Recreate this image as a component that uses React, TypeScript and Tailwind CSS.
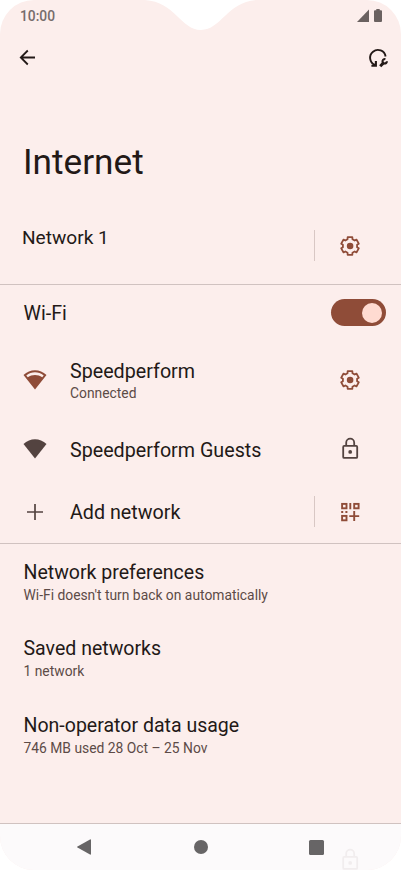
import type { ReactNode } from "react";

const TITLE = "text-[19.7px] leading-6 text-[#231917]";
const SUMMARY = "text-[13.85px] leading-5 text-[#5c4b47]";

/** Six-toothed outline: [angle offset, radius] corners repeated every 60 degrees. */
const GEAR_POINTS = Array.from({ length: 6 }, (_, i) =>
  [
    [-20, 7.2],
    [-15, 9.1],
    [15, 9.1],
    [20, 7.2],
  ].map(([offset, r]) => {
    const angle = ((i * 60 + offset) * Math.PI) / 180;
    return `${(12 + r * Math.sin(angle)).toFixed(2)},${(12 - r * Math.cos(angle)).toFixed(2)}`;
  }),
)
  .flat()
  .join(" ");

function GearIcon() {
  return (
    <svg viewBox="0 0 24 24" className="size-6 text-[#8f4c38]" fill="none">
      <polygon points={GEAR_POINTS} stroke="currentColor" strokeWidth="1.8" strokeLinejoin="round" />
      <circle cx="12.1" cy="12" r="3.3" fill="currentColor" />
    </svg>
  );
}

function LockIcon({ className }: { className: string }) {
  return (
    <svg viewBox="0 0 24 24" className={className} fill="none" stroke="currentColor" strokeWidth="1.8">
      <rect x="5.2" y="8.9" width="14" height="12" rx="1" />
      <path d="M8.2 8.9V5.7a4 4 0 0 1 8 0V8.900" />
      <circle cx="12.2" cy="14.9" r="1.9" fill="currentColor" stroke="none" />
    </svg>
  );
}

function QrAddIcon() {
  return (
    <svg viewBox="0 0 24 24" className="size-6 text-[#8f4c38]" fill="none" stroke="currentColor" strokeWidth="1.9">
      <rect x="4.1" y="3.9" width="4.4" height="4.4" />
      <rect x="16.2" y="3.9" width="4.4" height="4.4" />
      <rect x="4.1" y="15.9" width="4.4" height="4.4" />
      <path d="M12.3 3v6.3M3.2 12h2M7.4 12h2M16.2 11v10M11.3 16.1h9.900" />
    </svg>
  );
}

function ResetIcon() {
  return (
    <svg viewBox="0 0 24 24" className="size-6 text-[#231917]" fill="none" stroke="currentColor" strokeWidth="1.9">
      <path d="M19.6 10.5A7.8 7.8 0 1 0 9 19" />
      <path d="M5.4 19.800h4.500v-4.800" strokeWidth="2.1" />
      <path d="M14.2 20.200 18 16.400" strokeWidth="3" />
      <path d="M19.400 13.200a2.200 2.200 0 1 0 1.500 2" strokeWidth="2.1" />
    </svg>
  );
}

function SplitDivider() {
  return <span className="h-[31px] w-px bg-[#d8c7c4]" />;
}

function NetworkRow({
  icon,
  title,
  summary,
  action,
  split,
  className,
}: {
  icon: ReactNode;
  title: string;
  summary?: string;
  action: ReactNode;
  split?: boolean;
  className: string;
}) {
  return (
    <div className={`flex items-center pr-[39px] pl-[23px] ${className}`}>
      <span className="w-[47px] shrink-0">{icon}</span>
      <div className="flex-1 pt-[3px]">
        <div className={TITLE}>{title}</div>
        {summary && <div className={`${SUMMARY} -mt-px`}>{summary}</div>}
      </div>
      {split && <SplitDivider />}
      <span className="ml-[23px]">{action}</span>
    </div>
  );
}

function Preference({ title, summary }: { title: string; summary: string }) {
  return (
    <div className="h-[76.5px] px-[23.5px]">
      <div className="text-[19.55px] leading-6 text-[#231917]">{title}</div>
      <div className={SUMMARY}>{summary}</div>
    </div>
  );
}

export default function App() {
  return (
    <div className="bg-white">
      <div className="relative flex h-[870px] w-[401px] flex-col overflow-hidden rounded-[34px] bg-[#fceeec] font-['Roboto',sans-serif]">
        {/* camera cutout */}
        <svg viewBox="0 0 112 31" className="absolute top-0 left-[145px] h-[31px] w-28" fill="#fff">
          <path d="M0 0C30 2 36 30 56 30S82 2 112 0Z" />
        </svg>

        <div className="flex h-8 shrink-0 items-center justify-between pr-[19px] pl-5 text-[#6a6160]">
          <span className="text-[13.8px] leading-4 font-medium text-[#766c6b]">10:00</span>
          <span className="-mt-0.5 flex items-center gap-[5px]">
            <svg viewBox="0 0 12 13" className="h-[13px] w-3" fill="currentColor">
              <path d="M12 .5V13H0Z" />
            </svg>
            <svg viewBox="0 0 8 13" className="h-[13px] w-2" fill="currentColor">
              <path d="M2.3 0h3.4v1.2H7a1 1 0 0 1 1 1V12a1 1 0 0 1-1 1H1a1 1 0 0 1-1-1V2.2a1 1 0 0 1 1-1h1.3Z" />
            </svg>
          </span>
        </div>

        <div className="flex h-[52px] shrink-0 items-center justify-between pr-[11px] pl-[15px]">
          <svg viewBox="0 0 24 24" className="size-6 text-[#231917]" fill="none" stroke="currentColor" strokeWidth="1.8">
            <path d="M20 11.500H6M12.800 4.500l-7 7 7 7" />
          </svg>
          <ResetIcon />
        </div>

        <h1 className="mt-[54px] px-[23px] text-[35.2px] leading-[48px] text-[#231917]">Internet</h1>

        <div className="mt-5 flex h-[79px] shrink-0 items-center border-b border-[#d0c2c0] pr-[39px] pl-[22px]">
          <span className="-mt-[15px] flex-1 text-[19.1px] leading-6 text-[#231917]">Network 1</span>
          <SplitDivider />
          <span className="ml-[23px] pt-0.5">
            <GearIcon />
          </span>
        </div>

        <div className="flex h-14 shrink-0 items-center justify-between pr-[15.5px] pl-[23.5px]">
          <span className={`${TITLE} pt-0.5`}>Wi-Fi</span>
          <span className="mb-px flex h-[27px] w-[55px] items-center justify-end rounded-full bg-[#8f4c38] pr-1">
            <span className="size-5 rounded-full bg-[#ffdbd1]" />
          </span>
        </div>

        <NetworkRow
          className="mt-1 mb-0.5 h-[69px]"
          icon={
            <svg viewBox="0 0 24 20" className="h-5 w-6 text-[#8f4c38]" fill="currentColor">
              <path
                fillRule="evenodd"
                d="M.5 5C7-1.300 17-1.300 23.500 5L12 19.500ZM3.300 5.500 4.800 7.300C9 4.300 15 4.300 19.200 7.300L20.700 5.500C15.500 1.300 8.500 1.300 3.300 5.500Z"
              />
            </svg>
          }
          title="Speedperform"
          summary="Connected"
          action={<GearIcon />}
        />
        <NetworkRow
          className="h-[66px]"
          icon={
            <svg viewBox="0 0 24 20" className="h-5 w-6 text-[#534340]" fill="currentColor">
              <path d="M.5 5C7-1.300 17-1.300 23.500 5L12 19.500Z" />
            </svg>
          }
          title="Speedperform Guests"
          action={<LockIcon className="size-6 text-[#534340]" />}
        />
        <NetworkRow
          className="h-[62px] border-b border-[#d0c2c0] pb-0.5"
          icon={
            <svg viewBox="0 0 24 24" className="size-6 text-[#534340]" fill="none" stroke="currentColor" strokeWidth="1.7">
              <path d="M12 4v16M4 12h16" />
            </svg>
          }
          title="Add network"
          split
          action={<QrAddIcon />}
        />

        <div className="mt-[16.5px] flex-1">
          <Preference title="Network preferences" summary="Wi-Fi doesn't turn back on automatically" />
          <Preference title="Saved networks" summary="1 network" />
          <Preference title="Non-operator data usage" summary="746 MB used 28 Oct – 25 Nov" />
        </div>

        <div className="relative flex h-[47px] shrink-0 items-center border-t border-[#d0c2c0] bg-[#fcfafb] pl-[77px] text-[#676566]">
          <svg viewBox="0 0 14 16" className="h-4 w-3.5" fill="currentColor">
            <path d="M14 1v14a.7.7 0 0 1-1 .5L.5 8.600a.7.7 0 0 1 0-1.200L13 .5a.7.7 0 0 1 1 .5Z" />
          </svg>
          <span className="ml-[103px] size-3.5 rounded-full bg-current" />
          <span className="ml-[100.5px] size-[15px] rounded-[1.5px] bg-current" />
          {/* row scrolled behind the translucent bar */}
          <LockIcon className="absolute top-[24px] left-[338px] size-6 text-[#f1edee]" />
        </div>
      </div>
    </div>
  );
}
